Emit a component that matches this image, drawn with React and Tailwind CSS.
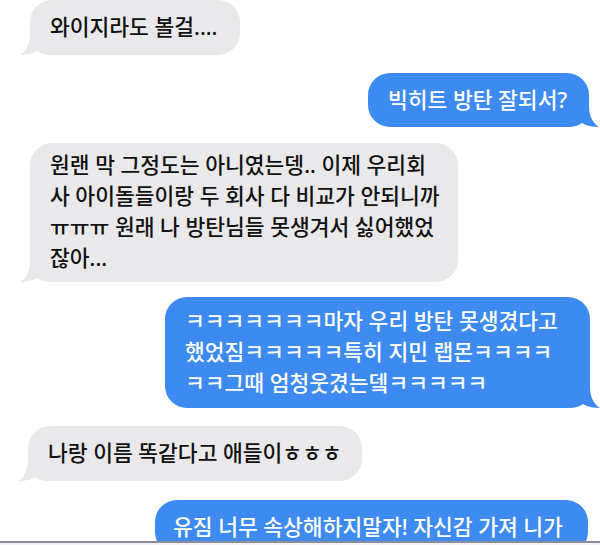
import React from "react";

const FONT = { fontFamily: '"Noto Sans", "Noto Sans CJK KR", sans-serif' };

function TailLeft() {
  return (
    <svg
      className="absolute bottom-0 left-[-10px]"
      width="32"
      height="22"
      viewBox="0 0 32 22"
    >
      <path
        d="M10 0 C10 12 6 18 0 22 C6 22 12 21 17 18 C21 21 26 22 32 22 L32 0 Z"
        fill="#e9e9eb"
      />
    </svg>
  );
}

function TailRight({ color }) {
  return (
    <svg
      className="absolute bottom-0 right-[-10px]"
      width="32"
      height="22"
      viewBox="0 0 32 22"
    >
      <path
        d="M22 0 C22 12 26 18 32 22 C26 22 20 21 15 18 C11 21 6 22 0 22 L0 0 Z"
        fill={color}
      />
    </svg>
  );
}

function Gray({ lines, className }) {
  return (
    <div
      className={`relative rounded-[22px] bg-[#e9e9eb] text-[21.5px] font-medium leading-[31px] text-[#111111] whitespace-nowrap ${className}`}
    >
      <TailLeft />
      <div className="relative">
        {lines.map((l, i) => (
          <div key={i}>{l}</div>
        ))}
      </div>
    </div>
  );
}

function Blue({ lines, className, tail = true }) {
  return (
    <div
      className={`relative rounded-[22px] bg-[#3d8bf1] text-[21.5px] font-medium leading-[31px] text-white whitespace-nowrap ${className}`}
    >
      {tail && <TailRight color="#3d8bf1" />}
      <div className="relative">
        {lines.map((l, i) => (
          <div key={i}>{l}</div>
        ))}
      </div>
    </div>
  );
}

export default function App() {
  return (
    <div className="w-[600px] h-[545px] bg-white flex flex-col overflow-hidden" style={FONT}>
      <div className="h-[541px] overflow-hidden flex flex-col">
        <div className="flex pl-[30px]">
          <Gray
            className="w-[210px] h-[55px] pl-[20px] pt-[11px]"
            lines={["와이지라도 볼걸...."]}
          />
        </div>
        <div className="flex justify-end pr-[11px] mt-[18px]">
          <Blue
            className="w-[221px] h-[54px] pl-[20px] pt-[11px]"
            lines={["빅히트 방탄 잘되서?"]}
          />
        </div>
        <div className="flex pl-[30px] mt-[16px]">
          <Gray
            className="w-[428px] h-[139px] pl-[20px] pt-[6px]"
            lines={[
              "원랜 막 그정도는 아니였는뎅.. 이제 우리회",
              "사 아이돌들이랑 두 회사 다 비교가 안되니까",
              "ㅠㅠㅠ 원래 나 방탄님들 못생겨서 싫어했었",
              "잖아...",
            ]}
          />
        </div>
        <div className="flex justify-end pr-[10px] mt-[15px]">
          <Blue
            className="w-[425px] h-[111px] pl-[20px] pt-[8px]"
            lines={[
              "ㅋㅋㅋㅋㅋㅋㅋ마자 우리 방탄 못생겼다고",
              "했었짐ㅋㅋㅋㅋㅋ특히 지민 랩몬ㅋㅋㅋㅋ",
              "ㅋㅋ그때 엄청웃겼는뎈ㅋㅋㅋㅋㅋ",
            ]}
          />
        </div>
        <div className="flex pl-[28px] mt-[18px]">
          <Gray
            className="w-[334px] h-[55px] pl-[20px] pt-[11px]"
            lines={["나랑 이름 똑같다고 애들이ㅎㅎㅎ"]}
          />
        </div>
        <div className="flex justify-end pr-[12px] mt-[19px]">
          <Blue
            className="w-[433px] h-[54px] pl-[18px] pt-[11px] shrink-0"
            tail={false}
            lines={["유짐 너무 속상해하지말자! 자신감 가져 니가"]}
          />
        </div>
      </div>
      <div className="h-[2px] bg-[#8d8c9a]" />
      <div className="flex-1 bg-[#f4f4f6]" />
    </div>
  );
}
